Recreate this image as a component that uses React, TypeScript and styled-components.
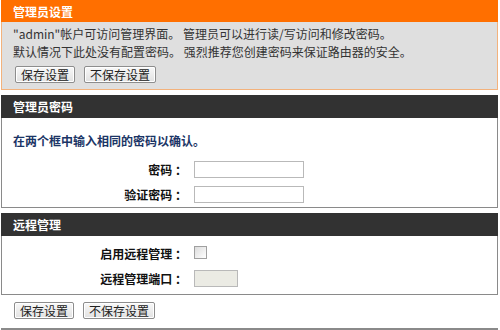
import { FC } from 'react'
import styled, { createGlobalStyle } from 'styled-components'

const GlobalStyle = createGlobalStyle`
  body {
    margin: 0;
    background: #ffffff;
    font-family: Tahoma, "Noto Sans CJK SC", "Noto Sans", sans-serif;
    font-size: 12px;
    color: #222222;
  }
`

const Page = styled.div`
  width: 497px;
  padding: 0 0 0 1px;
  display: flex;
  flex-direction: column;
  gap: 5px;
`

const Section = styled.div`
  display: flex;
  flex-direction: column;
`

const Header = styled.div<{ $orange?: boolean }>`
  height: ${p => (p.$orange ? '22px' : '23px')};
  display: flex;
  align-items: center;
  padding-left: 12px;
  background: ${p => (p.$orange ? '#ff6f00' : '#323232')};
  color: #ffffff;
  font-weight: bold;
  font-size: 12px;
`

const Body = styled.div<{ $orange?: boolean; $h: number }>`
  height: ${p => p.$h}px;
  box-sizing: border-box;
  background: ${p => (p.$orange ? '#dfdfdf' : '#ffffff')};
  border: 1px solid ${p => (p.$orange ? '#f3b27c' : '#8a8a8a')};
  border-top: none;
  display: flex;
  flex-direction: column;
`

const Intro = styled.div`
  padding: 3px 11px 0;
  line-height: 18px;
  color: #333333;
`

const ButtonRow = styled.div<{ $pad: string }>`
  display: flex;
  gap: 9px;
  padding: ${p => p.$pad};
`

const Button = styled.button`
  height: 17px;
  padding: 0 5px;
  font-family: inherit;
  font-size: 12px;
  line-height: 15px;
  color: #222222;
  background: linear-gradient(#f8f8f8, #e2e2e2);
  border: 1px solid #8d8d8d;
  border-radius: 2px;
  box-shadow: inset 0 0 0 1px #ffffff;
`

const Note = styled.div`
  padding: 14px 11px 12px;
  color: #1b3566;
  font-weight: bold;
`

const Form = styled.div<{ $top?: number }>`
  display: grid;
  grid-template-columns: 185px auto;
  column-gap: 7px;
  row-gap: 8px;
  align-items: center;
  justify-items: start;
  padding-top: ${p => p.$top ?? 0}px;
`

const Label = styled.div`
  justify-self: end;
  font-weight: bold;
  color: #111111;
`

const Input = styled.input<{ $w: number; $disabled?: boolean }>`
  width: ${p => p.$w}px;
  height: 17px;
  box-sizing: border-box;
  border: 1px solid #b9b9b9;
  background: ${p => (p.$disabled ? '#ebebe4' : '#ffffff')};
  margin: 0;
`

const Check = styled.span`
  width: 11px;
  height: 11px;
  border: 1px solid #a0a0a0;
  background: linear-gradient(135deg, #dcdcdc, #ffffff);
  margin: 2px 0 3px;
`

const BottomLine = styled.div`
  height: 2px;
  background: #8a8a8a;
  margin-top: 9px;
`

const App: FC = () => (
  <Page>
    <GlobalStyle />
    <Section>
      <Header $orange>管理员设置</Header>
      <Body $orange $h={68}>
        <Intro>
          "admin"帐户可访问管理界面。 管理员可以进行读/写访问和修改密码。
          <br />
          默认情况下此处没有配置密码。 强烈推荐您创建密码来保证路由器的安全。
        </Intro>
        <ButtonRow $pad="5px 13px 0">
          <Button>保存设置</Button>
          <Button>不保存设置</Button>
        </ButtonRow>
      </Body>
    </Section>
    <Section>
      <Header>管理员密码</Header>
      <Body $h={90}>
        <Note>在两个框中输入相同的密码以确认。</Note>
        <Form>
          <Label>密码 ：</Label>
          <Input type="password" $w={110} />
          <Label>验证密码 ：</Label>
          <Input type="password" $w={110} />
        </Form>
      </Body>
    </Section>
    <Section>
      <Header>远程管理</Header>
      <Body $h={59}>
        <Form $top={8}>
          <Label>启用远程管理 ：</Label>
          <Check />
          <Label>远程管理端口 ：</Label>
          <Input $w={44} $disabled disabled />
        </Form>
      </Body>
      <ButtonRow $pad="7px 13px 0">
        <Button>保存设置</Button>
        <Button>不保存设置</Button>
      </ButtonRow>
      <BottomLine />
    </Section>
  </Page>
)

export default App
